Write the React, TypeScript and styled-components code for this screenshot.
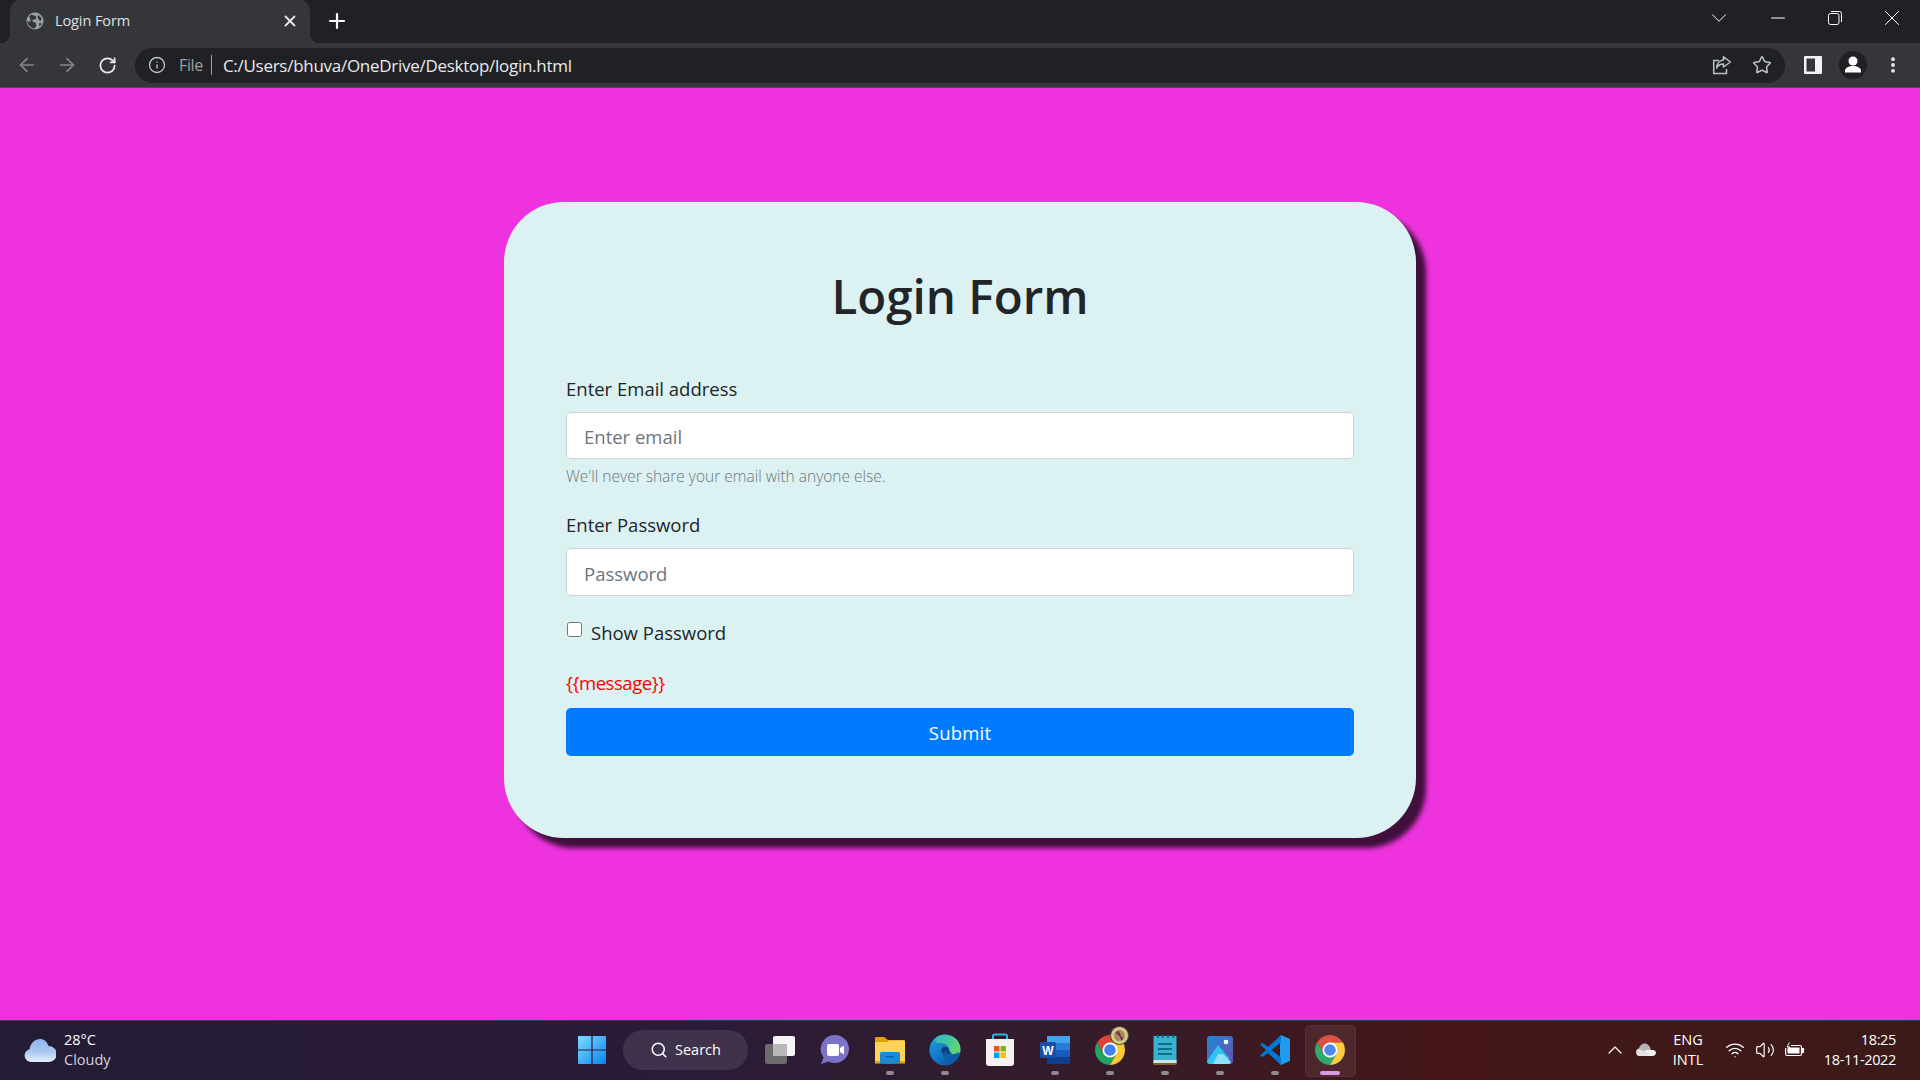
import React from "react";
import styled, { createGlobalStyle } from "styled-components";
import {
  ArrowLeft,
  ArrowRight,
  ChevronDown,
  ChevronUp,
  EllipsisVertical,
  Info,
  Minus,
  Plus,
  RotateCw,
  Search,
  Star,
  Volume2,
  Wifi,
  X,
} from "lucide-react";

const uiFont = `"Open Sans", "Noto Sans", sans-serif`;

const GlobalStyle = createGlobalStyle`
  html, body {
    margin: 0;
    height: 100%;
    overflow: hidden;
  }
  * {
    box-sizing: border-box;
  }
`;

const Screen = styled.div`
  display: flex;
  flex-direction: column;
  width: 1920px;
  height: 1080px;
  font-family: ${uiFont};
`;

/* browser chrome */
const TabStrip = styled.div`
  display: flex;
  align-items: stretch;
  height: 43px;
  padding-left: 10px;
  background: #202124;
  color: #fff;
`;

const Tab = styled.div`
  position: relative;
  display: flex;
  align-items: center;
  width: 300px;
  padding: 0 11px 2px 16px;
  background: #35363a;
  border-radius: 10px 10px 0 0;

  &::before,
  &::after {
    content: "";
    position: absolute;
    bottom: 0;
    width: 10px;
    height: 10px;
  }
  &::before {
    left: -10px;
    background: radial-gradient(circle at 0 0, transparent 10px, #35363a 10.5px);
  }
  &::after {
    right: -10px;
    background: radial-gradient(circle at 100% 0, transparent 10px, #35363a 10.5px);
  }
`;

const TabTitle = styled.span`
  flex: 1;
  margin-left: 11px;
  font-size: 14.5px;
  letter-spacing: -0.1px;
  color: #dfe1e5;
`;

const NewTab = styled.div`
  display: flex;
  align-items: center;
  margin-left: 15px;
  padding-bottom: 2px;
`;

const CaptionGroup = styled.div`
  display: flex;
  align-items: center;
  margin-left: auto;
  padding-bottom: 7px;
`;

const Caption = styled.div<{ $narrow?: boolean }>`
  display: flex;
  align-items: center;
  justify-content: center;
  width: ${(p) => (p.$narrow ? "50px" : "57px")};
  margin-right: ${(p) => (p.$narrow ? "5px" : "0")};
  height: 36px;
`;

const Toolbar = styled.div`
  display: flex;
  align-items: center;
  height: 45px;
  padding: 0 7px;
  background: #35363a;
  border-bottom: 1px solid #4d4e52;
`;

const NavButton = styled.div<{ $muted?: boolean }>`
  display: flex;
  flex: none;
  align-items: center;
  justify-content: center;
  width: 40px;
  height: 36px;
  color: ${(p) => (p.$muted ? "#85878a" : "#e8eaed")};
`;

const Omnibox = styled.div`
  display: flex;
  flex: 1;
  align-items: center;
  height: 35px;
  margin: 0 8px;
  padding: 0 3px 0 13px;
  border-radius: 18px;
  background: #202124;
  color: #e8eaed;
`;

const InfoSlot = styled.div`
  display: flex;
  color: #bdc1c6;
`;

const Scheme = styled.span`
  margin-left: 13px;
  padding-right: 8px;
  border-right: 1px solid #9aa0a6;
  font-size: 16px;
  line-height: 20px;
  letter-spacing: -0.35px;
  color: #9aa0a6;
`;

const Address = styled.span`
  flex: 1;
  margin-left: 11px;
  font-size: 17px;
  letter-spacing: -0.28px;
`;

/* the page */
const Page = styled.main`
  flex: 1;
  padding-top: 114px;
  background: #ee33de;
`;

const Card = styled.form`
  width: 912px;
  height: 636px;
  margin: 0 auto;
  padding: 64px 62px 0;
  border-radius: 60px;
  background: #dcf1f2;
  box-shadow: 10px 10px 5px #400f3c;
  color: #212529;
`;

const Heading = styled.h1`
  margin: 0 0 48px;
  font-size: 47.5px;
  font-weight: 600;
  line-height: 60px;
  text-align: center;
`;

const Field = styled.div`
  margin-bottom: 22px;
`;

const Label = styled.label`
  display: block;
  margin-bottom: 8px;
  font-size: 18.5px;
  line-height: 30px;
`;

const Input = styled.input<{ $short?: boolean }>`
  display: block;
  width: 100%;
  height: ${(p) => (p.$short ? "47px" : "48px")};
  padding: ${(p) => (p.$short ? "1px" : "2px")} 17px 0;
  border: 1px solid #ced4da;
  border-radius: 5px;
  background: #fff;
  font-family: inherit;
  font-size: 18.5px;

  &::placeholder {
    color: #6c757d;
    opacity: 1;
  }
`;

const Help = styled.small`
  display: block;
  margin-top: 5px;
  font-size: 15.5px;
  font-weight: 300;
  line-height: 24px;
  color: #6c757d;
`;

const CheckRow = styled.div`
  display: flex;
  align-items: flex-start;
  height: 30px;
  margin-top: -1px;
`;

const Check = styled.input`
  width: 15px;
  height: 15px;
  margin: 5px 9px 0 1px;
`;

const CheckLabel = styled.label`
  font-size: 18.5px;
  line-height: 32px;
`;

const Message = styled.p`
  margin: 21px 0 10px;
  font-size: 18.5px;
  line-height: 30px;
  letter-spacing: -0.45px;
  color: #f00;
`;

const Submit = styled.button`
  display: block;
  width: 100%;
  height: 48px;
  padding: 1px 0 0;
  border: 0;
  border-radius: 5px;
  background: #007bff;
  font-family: inherit;
  font-size: 18.5px;
  letter-spacing: 0.2px;
  color: #fff;
`;

/* windows taskbar */
const Taskbar = styled.footer`
  display: grid;
  grid-template-columns: 1fr auto 1fr;
  align-items: center;
  height: 60px;
  padding-bottom: 2px;
  border-top: 1px solid #473a50;
  background: linear-gradient(90deg, #241b34 0%, #2a1b38 35%, #331c2c 55%, #451618 75%, #3a1a18 100%);
  color: #fff;
`;

const Weather = styled.div`
  display: flex;
  align-items: center;
  padding-left: 24px;
`;

const WeatherText = styled.div`
  margin-left: 8px;
  font-size: 14.5px;
  line-height: 20px;
`;

const WeatherSub = styled.div`
  color: #d6d3da;
`;

const Dock = styled.div`
  display: flex;
  align-items: center;
  margin-left: 2px;
`;

const DockItem = styled.div<{ $running?: boolean; $active?: boolean }>`
  position: relative;
  display: flex;
  align-items: center;
  justify-content: center;
  width: 55px;
  height: 57px;

  &::before {
    content: "";
    position: absolute;
    display: ${(p) => (p.$active ? "block" : "none")};
    top: 4px;
    left: 3px;
    width: 49px;
    height: 50px;
    border: 1px solid rgba(255, 255, 255, 0.05);
    border-radius: 5px;
    background: rgba(255, 255, 255, 0.07);
  }

  &::after {
    content: "";
    position: absolute;
    display: ${(p) => (p.$running ? "block" : "none")};
    bottom: 3px;
    left: 50%;
    width: ${(p) => (p.$active ? "20px" : "8px")};
    height: 4px;
    border-radius: 2px;
    background: ${(p) => (p.$active ? "#d99ae0" : "#8f8a8c")};
    transform: translateX(-50%);
  }
`;

const SearchPill = styled.div`
  display: flex;
  align-items: center;
  justify-content: center;
  gap: 7px;
  width: 125px;
  height: 40px;
  margin: 0 4px 0 3px;
  border-radius: 20px;
  background: rgba(255, 255, 255, 0.1);
  font-size: 14.5px;
`;

const Tray = styled.div`
  display: flex;
  align-items: center;
  justify-content: flex-end;
  padding-right: 24px;
`;

const TraySlot = styled.div<{ $w: number }>`
  display: flex;
  align-items: center;
  justify-content: center;
  width: ${(p) => p.$w}px;
`;

const TrayText = styled.div<{ $align: string; $w: number; $tight?: boolean }>`
  width: ${(p) => p.$w}px;
  font-size: 14.5px;
  line-height: 20px;
  letter-spacing: ${(p) => (p.$tight ? "-0.35px" : "0")};
  text-align: ${(p) => p.$align};
`;

function GlobeIcon() {
  return (
    <svg width="18" height="18" viewBox="0 0 18 18">
      <circle cx="9" cy="9" r="8.5" fill="#9aa0a6" />
      <path d="M5 2.500 9.500 4l1 2L8 8 6 7.500 7 10l2.500.5 1 3-2 3C5 16 1.500 13 1 9l3 1 .5-3L3 5z" fill="#35363a" />
      <path d="M12 3l3.500 3-.5 3-2-1-1.500-3zM13 11l3 .5-2.500 3z" fill="#35363a" />
    </svg>
  );
}

function RestoreIcon() {
  return (
    <svg width="14" height="14" viewBox="0 0 14 14" fill="none" stroke="#fff" strokeWidth="1">
      <rect x="0.5" y="2.5" width="10.5" height="11" rx="2" />
      <path d="M3 .5h8.500a2 2 0 0 1 2 2V11" />
    </svg>
  );
}

function ShareIcon() {
  return (
    <svg width="20" height="20" viewBox="0 0 20 20" fill="none" stroke="#bdc1c6" strokeWidth="1.5">
      <path d="M7 5.500H1.700v13h12.800V14" />
      <path d="M11.500 1.800 18.500 7l-7 5V9C8 9 6 10 4.700 13 4.800 8.500 7.500 5.300 11.500 5z" strokeLinejoin="round" />
    </svg>
  );
}

function SidePanelIcon() {
  return (
    <svg width="18" height="18" viewBox="0 0 18 18">
      <rect width="18" height="18" rx="1" fill="#f1f3f4" />
      <rect x="2.500" y="2.500" width="8.500" height="13" fill="#35363a" />
    </svg>
  );
}

function ProfileIcon() {
  return (
    <svg width="28" height="28" viewBox="0 0 28 28">
      <circle cx="14" cy="14" r="14" fill="#202124" />
      <circle cx="14" cy="10" r="4.500" fill="#fff" />
      <path d="M6 20c0-3.500 4-5 8-5s8 1.500 8 5v1.500H6z" fill="#fff" />
    </svg>
  );
}

function CloudIcon() {
  return (
    <svg width="32" height="26" viewBox="0 0 32 26">
      <defs>
        <linearGradient id="weatherCloud" x1="0" y1="0" x2="0" y2="1">
          <stop offset="0" stopColor="#8db4ea" />
          <stop offset="0.55" stopColor="#a9c7f0" />
          <stop offset="1" stopColor="#e6eefb" />
        </linearGradient>
      </defs>
      <path
        d="M7 25a6.500 6.500 0 0 1-1.500-12.800C6.500 6 11 2 16 2c4 0 7 2.500 8.500 7A8 8 0 0 1 25 25z"
        fill="url(#weatherCloud)"
      />
    </svg>
  );
}

function WindowsLogo() {
  return (
    <svg width="30" height="30" viewBox="1 0 30 30">
      <defs>
        <linearGradient id="winTiles" x1="0" y1="0" x2="1" y2="1">
          <stop offset="0" stopColor="#7ddcff" />
          <stop offset="1" stopColor="#0a84f0" />
        </linearGradient>
      </defs>
      <path d="M1 2a1 1 0 0 1 1-1h12.400v13.400H1zM15.600 1H28a1 1 0 0 1 1 1v12.400H15.600zM1 15.600h13.400V29H2a1 1 0 0 1-1-1zM15.600 15.600H29V28a1 1 0 0 1-1 1H15.600z" fill="url(#winTiles)" />
    </svg>
  );
}

function TaskViewIcon() {
  return (
    <svg width="32" height="30" viewBox="0 0 32 30">
      <rect x="1" y="9" width="22" height="20" rx="2" fill="#6d6a6c" />
      <rect x="9" y="1" width="22" height="20" rx="2" fill="#f4f4f4" />
      <rect x="9" y="9" width="14" height="12" fill="#b9b7b8" />
    </svg>
  );
}

function TeamsIcon() {
  return (
    <svg width="30" height="32" viewBox="0 0 30 32">
      <path d="M15 1a14 14 0 1 1-6.500 26.400L1 30l2.600-6.500A14 14 0 0 1 15 1z" fill="#7b73c9" />
      <rect x="7" y="10" width="12" height="12" rx="2" fill="#fff" />
      <path d="M20 14l4-2.500v9L20 18z" fill="#fff" />
    </svg>
  );
}

function FolderIcon() {
  return (
    <svg width="30" height="30" viewBox="0 0 30 30">
      <path d="M0 3a1 1 0 0 1 1-1h8l4 3h16a1 1 0 0 1 1 1v6H0z" fill="#e0a006" />
      <path d="M0 7h12l2-1.500h15a1 1 0 0 1 1 1V28H0z" fill="#fdd358" />
      <rect x="0" y="26" width="30" height="2.500" fill="#e5a90e" />
      <path d="M5 19a2 2 0 0 1 2-2h16a2 2 0 0 1 2 2v9H5z" fill="#1b8ad6" />
      <rect x="11" y="21" width="8" height="1.500" fill="#0c5ea6" />
    </svg>
  );
}

function EdgeIcon() {
  return (
    <svg width="32" height="32" viewBox="0 0 32 32">
      <defs>
        <linearGradient id="edgeBody" x1="0.15" y1="0.1" x2="0.85" y2="0.95">
          <stop offset="0" stopColor="#1a9bd8" />
          <stop offset="0.55" stopColor="#1474c4" />
          <stop offset="1" stopColor="#0b4f9c" />
        </linearGradient>
        <linearGradient id="edgeTop" x1="0" y1="0.2" x2="1" y2="0.7">
          <stop offset="0" stopColor="#2fb6c8" />
          <stop offset="1" stopColor="#64d86b" />
        </linearGradient>
      </defs>
      <circle cx="16" cy="16" r="15.500" fill="url(#edgeBody)" />
      <path d="M5 6C9 0 19-1 26 4c4 3 6 8 5.400 13-.3 2.500-3 3.500-7 3.500-3 0-5-1-4.400-2.500 1-3-1-8-6-8.500C9 9 6 9 5 6z" fill="url(#edgeTop)" />
      <path d="M13 14c3-2.500 6.500-1 7 1.800.2 1.500 1 2.700 3 3.200-2 2-7 2.700-9 .5-1.500-1.500-2-4-1-5.500z" fill="#0b3f80" />
      <path d="M16 17c1.500 3 5 4 9 3 2-.5 4-1.500 5-2.500-1 6-5 12-12 13-3 .3-6-1-7-3 3 1 8 1 10-1-3 .5-7-1-7-5 0-2 1-3.500 2-4.500z" fill="#0d5dab" opacity="0.9" />
    </svg>
  );
}

function StoreIcon() {
  return (
    <svg width="30" height="34" viewBox="0 0 30 34">
      <path d="M8 8V3a1.500 1.500 0 0 1 1.500-1.500h11A1.500 1.500 0 0 1 22 3v5" fill="none" stroke="#2ab5e8" strokeWidth="2" />
      <path d="M1 6h28v24a3 3 0 0 1-3 3H4a3 3 0 0 1-3-3z" fill="#f5f3f2" />
      <rect x="9" y="13" width="5.500" height="5.500" fill="#f25022" />
      <rect x="15.500" y="13" width="5.500" height="5.500" fill="#7fba00" />
      <rect x="9" y="19.500" width="5.500" height="5.500" fill="#00a4ef" />
      <rect x="15.500" y="19.500" width="5.500" height="5.500" fill="#ffb900" />
    </svg>
  );
}

function WordIcon() {
  return (
    <svg width="30" height="30" viewBox="0 0 30 30">
      <rect x="7" y="1" width="23" height="7" fill="#41a5ee" />
      <rect x="7" y="8" width="23" height="7" fill="#2b7cd3" />
      <rect x="7" y="15" width="23" height="7" fill="#185abd" />
      <rect x="7" y="22" width="23" height="7" fill="#103f91" />
      <rect x="0" y="7" width="16" height="16" rx="1.500" fill="#1a4fa8" />
      <text x="8" y="20" fontFamily="Liberation Sans, sans-serif" fontSize="12" fontWeight="700" fill="#fff" textAnchor="middle">
        W
      </text>
    </svg>
  );
}

function ChromeIcon() {
  return (
    <svg width="30" height="32" viewBox="2 1 44 46">
      <path d="M24 24 14.470 29.500 4.950 13A22 22 0 0 1 43.050 13H24z" fill="#db4437" />
      <path d="M4.950 13A22 22 0 0 0 24 46L33.530 29.500 24 24 14.470 29.500z" fill="#1fa463" />
      <path d="M43.050 13A22 22 0 0 1 24 46L33.530 29.500 24 24V13z" fill="#fcc934" />
      <circle cx="24" cy="24" r="11" fill="#fff" />
      <circle cx="24" cy="24" r="8.500" fill="#3f82ed" />
    </svg>
  );
}

function ChromeBadge() {
  return (
    <svg width="19" height="19" viewBox="0 0 19 19">
      <circle cx="9.500" cy="9.500" r="9" fill="#d6c98c" stroke="#4a4a38" strokeWidth="1" />
      <circle cx="9.500" cy="9.500" r="5.500" fill="#a88a5c" />
      <path d="M6 6l7 7M8 5l4 9" stroke="#7a2f55" strokeWidth="1.500" />
    </svg>
  );
}

const BadgeSlot = styled.div`
  position: absolute;
  top: 5px;
  right: 8px;
  display: flex;
`;

function NotepadIcon() {
  return (
    <svg width="24" height="32" viewBox="0 0 24 32">
      <rect x="0.500" y="2" width="23" height="28" fill="#39b1cf" />
      <rect x="0.500" y="26" width="23" height="3" fill="#cfe7ea" />
      <rect x="0.500" y="29" width="23" height="2" fill="#8a5a2b" />
      <path d="M4 2.500h2M9 2.500h2M14 2.500h2M19 2.500h2" stroke="#0d6d8a" strokeWidth="3" />
      <path d="M5 10h14M5 15h14M5 20h14" stroke="#0d6d8a" strokeWidth="2" />
    </svg>
  );
}

function PhotosIcon() {
  return (
    <svg width="26" height="28" viewBox="0 0 26 28">
      <defs>
        <linearGradient id="photoBg" x1="0" y1="0" x2="1" y2="1">
          <stop offset="0" stopColor="#1e88d6" />
          <stop offset="1" stopColor="#6b4fb0" />
        </linearGradient>
      </defs>
      <rect width="26" height="28" rx="3" fill="url(#photoBg)" />
      <circle cx="19" cy="6" r="2.300" fill="#fff" />
      <path d="M0 25 11 9l11 13v6H3a3 3 0 0 1-3-3z" fill="#2fc3ef" />
      <path d="M11 18l5 0 8 8a3 3 0 0 1-2 2H6z" fill="#8ce0f8" />
    </svg>
  );
}

function VscodeIcon() {
  return (
    <svg width="30" height="32" viewBox="0 0 30 32">
      <path d="M21 1 30 5v22l-9 4-1-4V5z" fill="#1f9cf0" />
      <path d="M21 1 8 13 2.500 9 0 10.500 6 16 0 21.500 2.500 23 8 19l13 12v-7.500L11.500 16 21 8.500z" fill="#0078d4" />
    </svg>
  );
}

function OneDriveIcon() {
  return (
    <svg width="21" height="14" viewBox="0 0 21 14">
      <path d="M5 13h13a3 3 0 0 0 .7-5.900L10 7z" fill="#f1f1f1" />
      <path d="M5 13a4 4 0 0 1-1-7.800C5 1.500 8 0 10.500 .5 13 1 15 3 16 7H10z" fill="#b7b2b2" />
      <path d="M5 13a3.500 3.500 0 0 1-.5-7l4.500 2 5 2-3 3z" fill="#e3e1e1" />
    </svg>
  );
}

function BatteryIcon() {
  return (
    <svg width="20" height="16" viewBox="0 0 20 16" fill="none" stroke="#fff" strokeWidth="1.200">
      <path d="M6 3.500h9a1.500 1.500 0 0 1 1.500 1.500v7a1.500 1.500 0 0 1-1.500 1.500H2A1.500 1.500 0 0 1 .6 12V6" />
      <rect x="2.500" y="5.500" width="12" height="6" fill="#fff" stroke="none" />
      <path d="M17 6.500h1.500v4H17" fill="#fff" />
      <path d="M4.500 .5 2 5h3L3 8.500" strokeWidth="1" />
    </svg>
  );
}

const dockApps = [
  { name: "Teams", icon: <TeamsIcon /> },
  { name: "Files", icon: <FolderIcon />, running: true },
  { name: "Edge", icon: <EdgeIcon />, running: true },
  { name: "Store", icon: <StoreIcon /> },
  { name: "Word", icon: <WordIcon />, running: true },
  { name: "Chrome profile", icon: <ChromeIcon />, running: true, badge: true },
  { name: "Notepad", icon: <NotepadIcon />, running: true },
  { name: "Photos", icon: <PhotosIcon />, running: true },
  { name: "Code", icon: <VscodeIcon />, running: true },
  { name: "Chrome", icon: <ChromeIcon />, running: true, active: true },
];

export default function App() {
  return (
    <Screen>
      <GlobalStyle />
      <TabStrip>
        <Tab>
          <GlobeIcon />
          <TabTitle>Login Form</TabTitle>
          <X size={18} strokeWidth={2.4} color="#e8eaed" />
        </Tab>
        <NewTab>
          <Plus size={24} strokeWidth={2.2} />
        </NewTab>
        <CaptionGroup>
          <Caption $narrow>
            <ChevronDown size={26} strokeWidth={0.9} />
          </Caption>
          <Caption>
            <Minus size={22} strokeWidth={1.1} />
          </Caption>
          <Caption>
            <RestoreIcon />
          </Caption>
          <Caption>
            <X size={26} strokeWidth={0.9} />
          </Caption>
        </CaptionGroup>
      </TabStrip>

      <Toolbar>
        <NavButton $muted>
          <ArrowLeft size={22} strokeWidth={1.8} />
        </NavButton>
        <NavButton $muted>
          <ArrowRight size={22} strokeWidth={1.8} />
        </NavButton>
        <NavButton>
          <RotateCw size={19} strokeWidth={2.2} />
        </NavButton>
        <Omnibox>
          <InfoSlot>
            <Info size={18} strokeWidth={1.8} />
          </InfoSlot>
          <Scheme>File</Scheme>
          <Address>C:/Users/bhuva/OneDrive/Desktop/login.html</Address>
          <NavButton>
            <ShareIcon />
          </NavButton>
          <NavButton>
            <Star size={20} strokeWidth={1.8} color="#bdc1c6" />
          </NavButton>
        </Omnibox>
        <NavButton>
          <SidePanelIcon />
        </NavButton>
        <NavButton>
          <ProfileIcon />
        </NavButton>
        <NavButton>
          <EllipsisVertical size={20} strokeWidth={2.6} />
        </NavButton>
      </Toolbar>

      <Page>
        <Card>
          <Heading>Login Form</Heading>
          <Field>
            <Label htmlFor="email">Enter Email address</Label>
            <Input $short id="email" type="email" placeholder="Enter email" />
            <Help>We'll never share your email with anyone else.</Help>
          </Field>
          <Field>
            <Label htmlFor="password">Enter Password</Label>
            <Input id="password" type="password" placeholder="Password" />
          </Field>
          <CheckRow>
            <Check id="show" type="checkbox" />
            <CheckLabel htmlFor="show">Show Password</CheckLabel>
          </CheckRow>
          <Message>{"{{message}}"}</Message>
          <Submit type="button">Submit</Submit>
        </Card>
      </Page>

      <Taskbar>
        <Weather>
          <CloudIcon />
          <WeatherText>
            <div>28°C</div>
            <WeatherSub>Cloudy</WeatherSub>
          </WeatherText>
        </Weather>

        <Dock>
          <DockItem>
            <WindowsLogo />
          </DockItem>
          <SearchPill>
            <Search size={18} strokeWidth={2} />
            Search
          </SearchPill>
          <DockItem>
            <TaskViewIcon />
          </DockItem>
          {dockApps.map((app) => (
            <DockItem key={app.name} $running={app.running} $active={app.active}>
              {app.icon}
              {app.badge && (
                <BadgeSlot>
                  <ChromeBadge />
                </BadgeSlot>
              )}
            </DockItem>
          ))}
        </Dock>

        <Tray>
          <TraySlot $w={38}>
            <ChevronUp size={24} strokeWidth={1.2} />
          </TraySlot>
          <TraySlot $w={22}>
            <OneDriveIcon />
          </TraySlot>
          <TrayText $align="center" $w={64}>
            <div>ENG</div>
            <div>INTL</div>
          </TrayText>
          <TraySlot $w={30}>
            <Wifi size={20} strokeWidth={1.6} />
          </TraySlot>
          <TraySlot $w={30}>
            <Volume2 size={20} strokeWidth={1.4} />
          </TraySlot>
          <TraySlot $w={30}>
            <BatteryIcon />
          </TraySlot>
          <TrayText $align="right" $w={86} $tight>
            <div>18:25</div>
            <div>18-11-2022</div>
          </TrayText>
        </Tray>
      </Taskbar>
    </Screen>
  );
}
